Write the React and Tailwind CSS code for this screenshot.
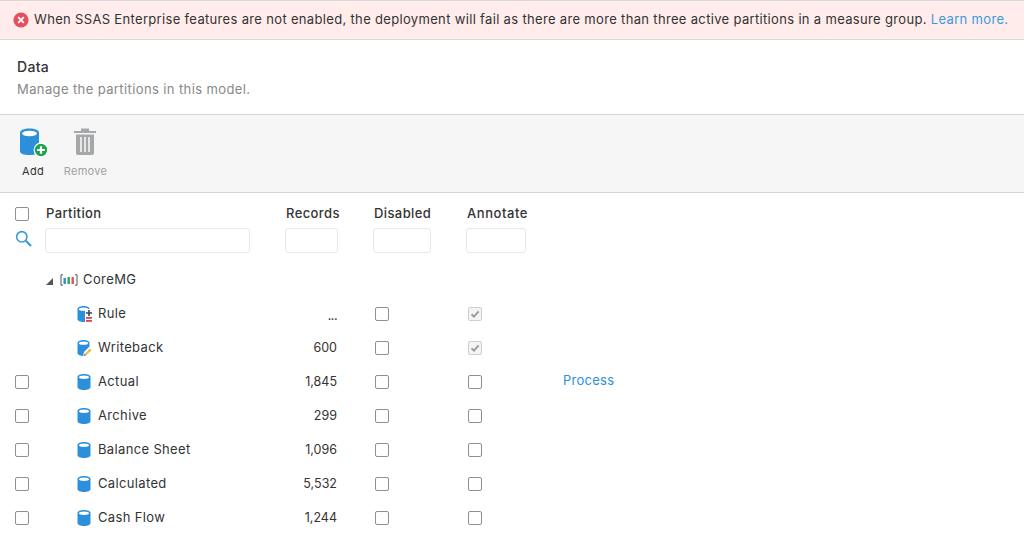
function Cyl({ className = "" }) {
  return (
    <svg viewBox="0 0 14 16" className={"w-[14px] h-[16px] " + className}>
      <path d="M0.5 3 C0.5 1 3.5 0 7 0 C10.5 0 13.5 1 13.5 3 V13 C13.5 15 10.5 16 7 16 C3.5 16 0.5 15 0.5 13 Z" fill="#2b90d9" />
      <ellipse cx="7" cy="3.2" rx="5" ry="1.7" fill="#fff" />
    </svg>
  );
}
function RuleIcon() {
  return (
    <svg viewBox="0 0 16 16" className="w-[16px] h-[16px]">
      <path d="M0.5 3 C0.5 1 3.5 0 6.5 0 C9.5 0 12.5 1 12.5 3 V13 C12.5 15 9.5 16 6.5 16 C3.5 16 0.5 15 0.5 13 Z" fill="#2b90d9" />
      <ellipse cx="6.5" cy="3.2" rx="4.6" ry="1.6" fill="#fff" />
      <rect x="8" y="3" width="8" height="13" fill="#fff" />
      <path d="M9 7 H15 M12 4 V10" stroke="#444" strokeWidth="1.6" />
      <rect x="9" y="11" width="6" height="1.8" fill="#e0424f" />
      <rect x="9" y="14" width="6" height="1.8" fill="#e0424f" />
    </svg>
  );
}
function WriteIcon() {
  return (
    <svg viewBox="0 0 16 16" className="w-[16px] h-[16px]">
      <path d="M0.5 3 C0.5 1 3.5 0 6.5 0 C9.5 0 12.5 1 12.5 3 V11 L7 16 C3.5 16 0.5 15 0.5 13 Z" fill="#2b90d9" />
      <ellipse cx="6.5" cy="3.2" rx="4.6" ry="1.6" fill="#fff" />
      <path d="M6 16 L7 12 L12.5 6.5 L16 10 L10.5 15.5 Z" fill="#fff" />
      <path d="M7.8 14 L12.8 8.6 L14.6 10.2 L9.5 15 Z" fill="#f0b93a" />
      <path d="M6.8 15.8 L7.6 13.8 L9.2 15.2 Z" fill="#555" />
    </svg>
  );
}
function Box({ checked }) {
  if (checked)
    return (
      <span className="w-[14px] h-[14px] border border-[#cfcfcf] rounded-[2px] bg-[#f4f4f4] flex items-center justify-center">
        <svg viewBox="0 0 10 10" className="w-[10px] h-[10px]">
          <path d="M1.5 5.2 L4 7.6 L8.6 2.4" stroke="#9a9a9a" strokeWidth="1.9" fill="none" />
        </svg>
      </span>
    );
  return <span className="w-[14px] h-[14px] border border-[#8f8f8f] rounded-[2px] bg-white block" />;
}
function Row({ sel, icon, name, rec, ann, proc }) {
  return (
    <div className="h-[34px] flex items-center text-[13px] text-[#333]">
      <div className="w-[77px] pl-[15px] flex items-center">{sel && <Box />}</div>
      <div className="w-[21px] flex items-center">{icon}</div>
      <div className="w-[187px] tracking-[0.35px]">{name}</div>
      <div className="w-[52px] text-right text-[12.5px]">{rec}</div>
      <div className="w-[38px] pl-[38px]"><Box /></div>
      <div className="w-[93px] pl-[93px]"><Box checked={ann} /></div>
      {proc && <span className="ml-[95px] text-[#2b90d9] tracking-[0.25px] -mt-[2px]">Process</span>}
    </div>
  );
}
export default function App() {
  return (
    <div className="w-[1024px] h-[541px] overflow-hidden bg-white font-['Inter',sans-serif]">
      <div className="h-[40px] border-y border-[#d9d9d9] bg-[#ffeceb] flex items-center pl-[13px] text-[13px] text-[#333] whitespace-nowrap">
        <svg viewBox="0 0 16 16" className="w-[16px] h-[16px] mr-[5px]">
          <circle cx="8" cy="8" r="7.6" fill="#e4505f" />
          <path d="M5.2 5.2 L10.8 10.8 M10.8 5.2 L5.2 10.8" stroke="#fff" strokeWidth="1.8" />
        </svg>
        <span className="tracking-[0.33px]">When SSAS Enterprise features are not enabled, the deployment will fail as there are more than three active partitions in a measure group. <span className="text-[#3a9bdc]">Learn more.</span></span>
      </div>
      <div className="h-[75px] pl-[17px] pt-[18px] border-b border-[#d4d4d4]">
        <div className="text-[14px] leading-[18px] font-medium text-[#333] tracking-[0.3px]">Data</div>
        <div className="text-[13px] leading-[18px] mt-[4px] text-[#888] tracking-[0.39px]">Manage the partitions in this model.</div>
      </div>
      <div className="h-[78px] bg-[#f6f6f6] border-b border-[#d4d4d4] flex pl-[18px] pt-[13px]">
        <div className="w-[45px] flex flex-col items-start">
          <svg viewBox="0 0 30 30" className="w-[30px] h-[30px] ml-[1px]">
            <path d="M1 5 C1 2 5 0.5 10.5 0.5 C16 0.5 20 2 20 5 V23 C20 26 16 27 10.5 27 C5 27 1 26 1 23 Z" fill="#2b90d9" />
            <ellipse cx="10.5" cy="5.5" rx="7.5" ry="2.8" fill="#fff" />
            <circle cx="22" cy="22" r="6.8" fill="#1fa34f" stroke="#fff" strokeWidth="1.2" />
            <path d="M18.2 22 H25.8 M22 18.2 V25.8" stroke="#fff" strokeWidth="2.2" />
          </svg>
          <span className="text-[11px] leading-[14px] text-[#333] mt-[6px] ml-[4px] tracking-[0.3px]">Add</span>
        </div>
        <div className="flex flex-col items-center w-[45px]">
          <svg viewBox="0 0 24 30" className="w-[24px] h-[30px] -ml-[1px]">
            <rect x="1" y="3" width="22" height="2" fill="#a5a8a9" />
            <rect x="8" y="0.5" width="8" height="3" fill="#a5a8a9" />
            <path d="M3 6.5 H21 V25 Q21 27 19 27 H5 Q3 27 3 25 Z" fill="#a5a8a9" />
            <path d="M8 9 V24 M12 9 V24 M16 9 V24" stroke="#f6f6f6" strokeWidth="1.6" />
          </svg>
          <span className="text-[11px] leading-[14px] text-[#a0a0a0] mt-[6px] tracking-[0.3px]">Remove</span>
        </div>
      </div>
      <div className="h-[35px] flex items-start pt-[12px] text-[13px] leading-[16px] font-medium text-[#333] tracking-[0.4px]">
        <div className="w-[46px] pl-[15px] pt-[2px]"><Box /></div>
        <div className="w-[240px]">Partition</div>
        <div className="w-[88px]">Records</div>
        <div className="w-[92px]">Disabled</div>
        <div className="tracking-[0.55px] ml-[1px]">Annotate</div>
      </div>
      <div className="h-[26px] flex items-start">
        <div className="w-[45px] pl-[15px] pt-[2px]">
          <svg viewBox="0 0 17 17" className="w-[17px] h-[17px]">
            <circle cx="6.8" cy="6.8" r="5.2" stroke="#3a9bdc" strokeWidth="1.6" fill="none" />
            <path d="M10.8 10.8 L16 16" stroke="#3a9bdc" strokeWidth="2.2" />
          </svg>
        </div>
        <div className="w-[205px] h-[25px] border border-[#e8e8e8] rounded-[3px]" />
        <div className="w-[53px] h-[25px] ml-[35px] border border-[#e8e8e8] rounded-[3px]" />
        <div className="w-[58px] h-[25px] ml-[35px] border border-[#e8e8e8] rounded-[3px]" />
        <div className="w-[60px] h-[25px] ml-[35px] border border-[#e8e8e8] rounded-[3px]" />
      </div>
      <div className="h-[34px] flex items-center pl-[46px] mt-[9px] text-[13px] text-[#333] tracking-[0.4px]">
        <svg viewBox="0 0 7 7" className="w-[7px] h-[7px] mr-[7px] mt-[2px]"><path d="M7 0 V7 H0 Z" fill="#555" /></svg>
        <svg viewBox="0 0 18 12" className="w-[18px] h-[12px] mr-[5px]">
          <path d="M3 0.8 H1 V11.2 H3 M15 0.8 H17 V11.2 H15" stroke="#555" strokeWidth="1" fill="none" />
          <rect x="3.5" y="4" width="2.4" height="6" fill="#2b90d9" />
          <rect x="7.5" y="3" width="2.4" height="7" fill="#2fa35a" />
          <rect x="11.5" y="3" width="2.4" height="7" fill="#e4505f" />
        </svg>
        CoreMG
      </div>
      <Row icon={<RuleIcon />} name="Rule" rec={<span className="relative top-[2px] tracking-[-0.5px]">...</span>} ann />
      <Row icon={<WriteIcon />} name="Writeback" rec="600" ann />
      <Row sel icon={<Cyl />} name="Actual" rec="1,845" proc />
      <Row sel icon={<Cyl />} name="Archive" rec="299" />
      <Row sel icon={<Cyl />} name="Balance Sheet" rec="1,096" />
      <Row sel icon={<Cyl />} name="Calculated" rec="5,532" />
      <Row sel icon={<Cyl />} name="Cash Flow" rec="1,244" />
    </div>
  );
}
